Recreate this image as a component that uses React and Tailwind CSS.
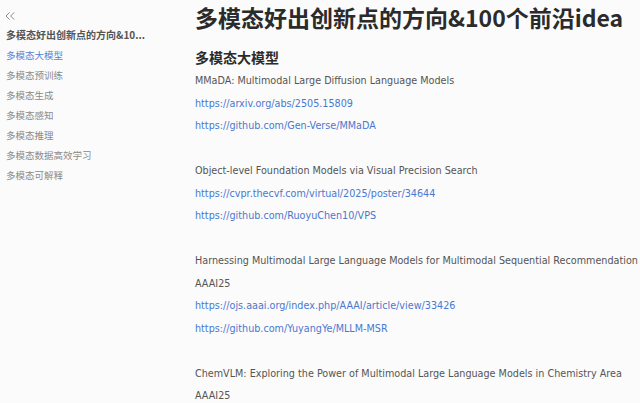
import { ChevronsLeft } from 'lucide-react';

const navItems = [
    '多模态大模型',
    '多模态预训练',
    '多模态生成',
    '多模态感知',
    '多模态推理',
    '多模态数据高效学习',
    '多模态可解释',
];

const lines = [
    { t: 'MMaDA: Multimodal Large Diffusion Language Models' },
    { t: 'https://arxiv.org/abs/2505.15809', link: true },
    { t: 'https://github.com/Gen-Verse/MMaDA', link: true },
    { t: '' },
    { t: 'Object-level Foundation Models via Visual Precision Search' },
    { t: 'https://cvpr.thecvf.com/virtual/2025/poster/34644', link: true },
    { t: 'https://github.com/RuoyuChen10/VPS', link: true },
    { t: '' },
    { t: 'Harnessing Multimodal Large Language Models for Multimodal Sequential Recommendation' },
    { t: 'AAAI25' },
    { t: 'https://ojs.aaai.org/index.php/AAAI/article/view/33426', link: true },
    { t: 'https://github.com/YuyangYe/MLLM-MSR', link: true },
    { t: '' },
    { t: 'ChemVLM: Exploring the Power of Multimodal Large Language Models in Chemistry Area' },
    { t: 'AAAI25' },
];

export default function App() {
    return (
        <div className="flex w-[640px] h-[403px] overflow-hidden bg-[#fbfbfb] font-['Noto_Sans_CJK_SC',sans-serif]">
            {/* Sidebar */}
            <aside className="w-[180px] shrink-0 pl-[6px] pt-[8px]">
                <ChevronsLeft className="-ml-[4px] w-[16px] h-[16px] text-[#777]" strokeWidth={1.3} />
                <div className="mt-[1px] h-[20px] leading-[20px] text-[10px] font-bold text-[#555] whitespace-nowrap">
                    多模态好出创新点的方向&10...
                </div>
                {navItems.map((item, i) => (
                    <div
                        key={item}
                        className={`h-[20px] leading-[20px] text-[9.5px] whitespace-nowrap ${i === 0 ? 'text-[#5a7fd4]' : 'text-[#8a8a8a]'}`}
                    >
                        {item}
                    </div>
                ))}
            </aside>

            {/* Main content */}
            <main className="flex-1 min-w-0 pl-[15px]">
                <h1 className="h-[34px] leading-[34px] text-[23px] font-bold text-[#2b2b2b] whitespace-nowrap">
                    多模态好出创新点的方向&100个前沿idea
                </h1>
                <h2 className="mt-[12px] h-[22px] leading-[22px] text-[14px] font-bold text-[#2b2b2b]">多模态大模型</h2>
                <div className="mt-[2px] font-['DejaVu_Sans',sans-serif] text-[9.65px]">
                    {lines.map((l, i) => (
                        <p
                            key={i}
                            className={`h-[22.5px] leading-[22.5px] whitespace-nowrap ${l.link ? 'text-[#4a78cf]' : 'text-[#555]'}`}
                        >
                            {l.t}
                        </p>
                    ))}
                </div>
            </main>
        </div>
    );
}
